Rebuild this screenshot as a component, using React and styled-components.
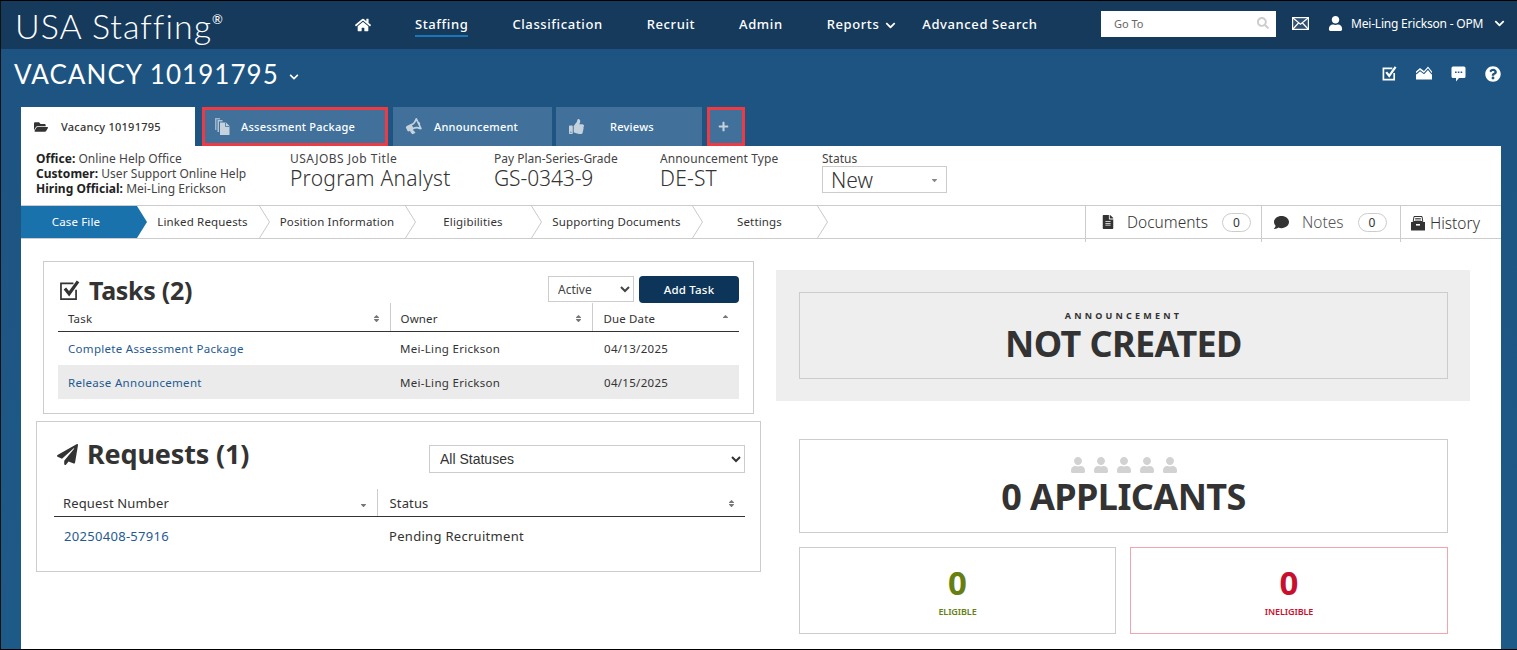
import React from 'react';
import styled, { createGlobalStyle } from 'styled-components';
import {
  FaHome, FaUser, FaChevronDown, FaFolderOpen, FaBullhorn, FaThumbsUp, FaPlus, FaSearch,
  FaFileAlt, FaComment, FaPaperPlane, FaSort, FaSortDown, FaSortUp, FaQuestionCircle,
} from 'react-icons/fa';

const GlobalStyle = createGlobalStyle`
  html, body { margin: 0; padding: 0; background: #1d5784; }
  * { box-sizing: border-box; }
  body { font-family: "Noto Sans", "Open Sans", sans-serif; color: #333; }
`;

const Frame = styled.div`
  width: 1517px;
  height: 650px;
  overflow: hidden;
  border-top: 1px solid #000;
  border-left: 1px solid #111;
  border-bottom: 1px solid #000;
  background: linear-gradient(180deg, #1d5380 0%, #1e5a88 100%);
`;

const Header = styled.header`
  height: 48px;
  background: #163a5c;
  display: flex;
  align-items: center;
  color: #fff;
  padding-left: 14px;
`;

const Logo = styled.div`
  font-family: Lato, sans-serif;
  font-weight: 300;
  font-size: 34px;
  letter-spacing: 1px;
  width: 340px;
  white-space: nowrap;
  sup { font-size: 13px; font-weight: 400; vertical-align: 15px; line-height: 0; letter-spacing: 0; }
`;

const Nav = styled.nav`
  display: flex;
  align-items: center;
  gap: 44px;
  width: 746px;
  margin-top: -1px;
`;

const NavLink = styled.span`
  font-size: 13px;
  letter-spacing: 0.6px;
  font-weight: 500;
  display: inline-flex;
  align-items: center;
  white-space: nowrap;
  padding: 3px 0 2px;
  border-bottom: 2px solid ${({ $active }) => ($active ? '#1a76b5' : 'transparent')};
  svg { margin: 2px -18px 0 6px; }
`;

const SearchBox = styled.div`
  width: 175px;
  height: 26px;
  margin-top: -3px;
  background: #fff;
  color: #666;
  font-size: 11px;
  display: flex;
  align-items: center;
  justify-content: space-between;
  padding: 0 7px 1px 13px;
  svg { color: #ccc; font-size: 12px; }
`;

const UserArea = styled.div`
  display: flex;
  align-items: center;
  margin: -3px 0 0 16px;
  font-size: 12px;
  letter-spacing: -0.2px;
  white-space: nowrap;
`;

const UserIcon = styled(FaUser)`
  margin-left: 19px;
`;

const UserName = styled.span`
  margin: 0 11px 0 8px;
`;

const TitleRow = styled.div`
  height: 58px;
  display: flex;
  justify-content: space-between;
  align-items: flex-start;
  color: #fff;
  padding: 9px 16px 0 13px;
`;

const VacancyTitle = styled.h1`
  margin: 0;
  font-family: Lato, sans-serif;
  font-weight: 400;
  font-size: 26px;
  letter-spacing: 1.05px;
  line-height: 32px;
  display: flex;
  align-items: center;
  gap: 10px;
  svg { font-size: 10px; margin-top: 5px; }
`;

const ToolIcons = styled.div`
  display: flex;
  gap: 19px;
  padding-top: 8px;
`;

const Tabs = styled.div`
  height: 39px;
  display: flex;
  padding-left: 20px;
`;

const Tab = styled.div`
  width: ${({ $w }) => $w}px;
  margin-right: ${({ $mr }) => $mr}px;
  display: flex;
  align-items: center;
  padding-left: ${({ $pl }) => $pl}px;
  font-size: 11px;
  font-weight: 500;
  letter-spacing: 0.25px;
  white-space: nowrap;
  color: ${({ $active }) => ($active ? '#333' : '#fff')};
  background: ${({ $active }) => ($active ? '#fff' : '#41719b')};
  border: ${({ $marked }) => ($marked ? '3px solid #ee3a43' : 'none')};
  svg { flex: none; color: ${({ $active }) => ($active ? '#333' : '#c4d2de')}; }
`;

const TabLabel = styled.span`
  margin-left: ${({ $ml }) => $ml}px;
`;

const TiltedBullhorn = styled(FaBullhorn)`
  transform: rotate(-25deg);
`;

const Content = styled.main`
  width: 1480px;
  height: 504px;
  margin-left: 20px;
  background: #fff;
`;

const InfoRow = styled.section`
  height: 59px;
  display: flex;
  padding: 5px 0 0 15px;
`;

const OrgBlock = styled.div`
  width: 254px;
  font-size: 12px;
  line-height: 15px;
  letter-spacing: 0.03px;
  color: #444;
  b { color: #222; font-weight: 700; }
`;

const InfoField = styled.div`
  width: ${({ $w }) => $w}px;
`;

const FieldLabel = styled.div`
  font-size: 12px;
  line-height: 15px;
  letter-spacing: ${({ $ls }) => $ls ?? 0}px;
  color: #444;
`;

const FieldValue = styled.div`
  font-size: 21px;
  line-height: 25px;
  letter-spacing: ${({ $ls }) => $ls ?? -0.1}px;
  font-weight: 300;
  color: #333;
`;

const StatusSelect = styled.div`
  width: 125px;
  height: 27px;
  border: 1px solid #ccc;
  display: flex;
  align-items: center;
  justify-content: space-between;
  padding: 0 7px 0 8px;
  font-size: 21px;
  font-weight: 300;
  svg { font-size: 9px; color: #888; margin-bottom: 3px; }
`;

const StepBar = styled.div`
  height: 34px;
  border-top: 1px solid #ccc;
  border-bottom: 1px solid #ccc;
  display: flex;
`;

const Steps = styled.div`
  flex: 1;
  display: flex;
`;

const Step = styled.div`
  position: relative;
  width: ${({ $w }) => $w}px;
  display: flex;
  align-items: center;
  justify-content: center;
  font-size: 11.5px;
  letter-spacing: 0.15px;
  white-space: nowrap;
  color: ${({ $active }) => ($active ? '#fff' : '#333')};
  background: ${({ $active }) => ($active ? '#1a72ad' : 'transparent')};
  clip-path: ${({ $active }) => ($active ? 'polygon(0 0, calc(100% - 10px) 0, 100% 50%, calc(100% - 10px) 100%, 0 100%)' : 'none')};
  padding: 0 ${({ $pr }) => $pr || 0}px 2px 0;
`;

const Chevron = styled.svg`
  position: absolute;
  right: 0;
  top: 0;
  width: 11px;
  height: 32px;
`;

const SideTab = styled.div`
  width: ${({ $w }) => $w}px;
  height: 36px;
  border-left: 1px solid #ccc;
  display: flex;
  align-items: center;
  padding: 0 0 ${({ $pb }) => $pb ?? 4}px ${({ $pl }) => $pl}px;
  font-size: 15.5px;
  font-weight: 300;
  color: ${({ $muted }) => ($muted ? '#555' : '#333')};
  white-space: nowrap;
  svg { color: #333; flex: none; }
`;

const SideLabel = styled.span`
  margin-left: ${({ $ml }) => $ml}px;
`;

const Count = styled.span`
  width: 29px;
  height: 19px;
  border: 1px solid #ccc;
  border-radius: 10px;
  margin-left: ${({ $ml }) => $ml}px;
  display: inline-flex;
  align-items: center;
  justify-content: center;
  font-size: 12px;
  font-weight: 400;
  color: #333;
`;

const Columns = styled.div`
  display: grid;
  grid-template-columns: 740px 1fr;
  column-gap: 15px;
`;

const LeftColumn = styled.div`
  padding: 22px 0 0 15px;
  display: flex;
  flex-direction: column;
  gap: 7px;
`;

const RightColumn = styled.div`
  padding-top: 31px;
`;

const Panel = styled.section`
  border: 1px solid #ccc;
  margin-left: ${({ $ml }) => $ml}px;
  width: ${({ $w }) => $w}px;
  height: ${({ $h }) => $h}px;
  padding: ${({ $p }) => $p};
`;

const PanelHead = styled.div`
  display: flex;
  justify-content: space-between;
  align-items: flex-start;
  height: ${({ $h }) => $h}px;
`;

const PanelTitle = styled.h2`
  margin: 0 0 0 ${({ $ml }) => $ml || 0}px;
  display: flex;
  align-items: center;
  gap: ${({ $gap }) => $gap}px;
  font-size: ${({ $size }) => $size}px;
  font-weight: 700;
  letter-spacing: ${({ $ls }) => $ls ?? -0.3}px;
  line-height: ${({ $lh }) => $lh || 30}px;
  color: #333;
`;

const Controls = styled.div`
  display: flex;
  gap: 5px;
`;

const SmallSelect = styled.select`
  width: 86px;
  height: 26px;
  border: 1px solid #ccc;
  background: #fff;
  padding-left: 5px;
  font: 12px "Noto Sans", sans-serif;
  color: #444;
`;

const WideSelect = styled.select`
  width: 316px;
  height: 28px;
  margin-top: 6px;
  border: 1px solid #ccc;
  background: #fff;
  padding-left: 6px;
  font: 14px "Liberation Sans", sans-serif;
  color: #333;
`;

const AddButton = styled.button`
  width: 100px;
  height: 27px;
  background: #0c3559;
  color: #fff;
  border: none;
  border-radius: 4px;
  font: 500 11.5px "Noto Sans", sans-serif;
  letter-spacing: 0.2px;
`;

const Table = styled.table`
  width: 100%;
  border-collapse: collapse;
  table-layout: fixed;
  font-size: ${({ $size }) => $size}px;
  color: #333;
`;

const Th = styled.th`
  width: ${({ $w }) => ($w ? `${$w}px` : 'auto')};
  height: ${({ $h }) => $h}px;
  font-weight: 400;
  text-align: left;
  padding: ${({ $pt }) => $pt || 0}px 9px 0 ${({ $pl }) => $pl || 10}px;
  border-bottom: 1px solid #333;
  border-right: 1px solid #ccc;
  &:last-child { border-right: none; }
`;

const ThInner = styled.div`
  display: flex;
  align-items: center;
  justify-content: space-between;
  letter-spacing: 0.15px;
  svg { font-size: 9px; color: #777; }
`;

const Td = styled.td`
  height: ${({ $h }) => $h}px;
  padding: 0 10px 0 ${({ $pl }) => $pl || 10}px;
  letter-spacing: 0.3px;
  white-space: nowrap;
`;

const Row = styled.tr`
  background: ${({ $shaded }) => ($shaded ? '#ebebeb' : 'transparent')};
`;

const TableLink = styled.a`
  color: #1f5a93;
`;

const NoticeWrap = styled.div`
  width: 694px;
  height: 131px;
  background: #eee;
  padding: 22px 22px 22px 23px;
`;

const NoticeBox = styled.div`
  height: 87px;
  border: 1px solid #ccc;
  text-align: center;
  padding-top: 17px;
`;

const NoticeLabel = styled.div`
  font-size: 9px;
  font-weight: 700;
  letter-spacing: 3.2px;
  line-height: 12px;
  color: #333;
  margin-bottom: 2px;
`;

const BigText = styled.div`
  font-size: 36px;
  font-weight: 700;
  letter-spacing: -0.6px;
  line-height: 40px;
  color: #333;
`;

const StatsArea = styled.div`
  width: 649px;
  margin: 38px 0 0 23px;
`;

const ApplicantsBox = styled.div`
  height: 94px;
  border: 1px solid #ccc;
  text-align: center;
  padding-top: 17px;
`;

const People = styled.div`
  display: flex;
  justify-content: center;
  gap: 7px;
  color: #d2d2d2;
  height: 18px;
  margin-bottom: 2px;
`;

const StatGrid = styled.div`
  display: grid;
  grid-template-columns: 317px 318px;
  column-gap: 14px;
  margin-top: 14px;
`;

const StatBox = styled.div`
  height: 87px;
  border: 1px solid ${({ $color }) => ($color === 'red' ? '#f3a5ad' : '#ccc')};
  color: ${({ $color }) => ($color === 'red' ? '#c8102e' : '#667f13')};
  text-align: center;
  padding-top: 15px;
`;

const StatNumber = styled.div`
  font-size: 33px;
  font-weight: 700;
  line-height: 40px;
`;

const StatLabel = styled.div`
  font-size: 9px;
  font-weight: 600;
  line-height: 18px;
  letter-spacing: -0.1px;
`;

const Mail = () => (
  <svg width="17" height="13" viewBox="0 0 17 13" fill="none" stroke="#fff" strokeWidth="1.2">
    <rect x="0.6" y="0.6" width="15.8" height="11.8" fill="#fff" fillOpacity="0.12" />
    <path d="M1 1l7.5 6.2L16 1M1 12l5.5-6M16 12l-5.5-6" />
  </svg>
);

const CheckBoxIcon = ({ size = 15, color = '#fff', weight = 1.8 }) => (
  <svg width={size} height={size} viewBox="0 0 16 16" fill="none" stroke={color}>
    <path d="M13 7.5V14.5H1.5V2.5H11" strokeWidth={weight} />
    <path d="M4.5 6.5l3.2 4L14.5 1" strokeWidth="2.4" />
  </svg>
);

const MailboxIcon = () => (
  <svg width="16" height="14" viewBox="0 0 16 14" fill="#fff">
    <path d="M0 13.5V5.5l4-3.5 4 3 4-4.5 4 5V13.5z" />
    <path d="M0 5.5l4-3.5 4 3 4-4.5 4 5" fill="none" stroke="#1d5784" strokeWidth="1.1" transform="translate(0 2.6)" />
  </svg>
);

const ChatDotsIcon = () => (
  <svg width="15" height="16" viewBox="0 0 15 16">
    <path fill="#fff" d="M2 .5h11a1.5 1.5 0 0 1 1.5 1.5v8.5A1.5 1.5 0 0 1 13 12H8l-3 3.5V12H2A1.5 1.5 0 0 1 .5 10.5V2A1.5 1.5 0 0 1 2 .5z" />
    <path fill="#1d5784" d="M4 5.5h1.6v1.6H4zM6.8 5.5h1.6v1.6H6.8zM9.6 5.5h1.6v1.6H9.6z" />
  </svg>
);

const CopiesIcon = () => (
  <svg width="15" height="17" viewBox="0 0 15 17" fill="#c4d2de">
    <path d="M0 0h5v1.5H1.5V12H0z" opacity=".7" />
    <path d="M2.5 2h5v1.5H4V14H2.5z" opacity=".85" />
    <path d="M5 4.5h6l3.5 3.5v9H5z" />
    <path d="M10.5 4.5V8.5h4" fill="none" stroke="#41719b" strokeWidth=".8" />
  </svg>
);

const HistoryIcon = () => (
  <svg width="14" height="15" viewBox="0 0 14 15" fill="#333">
    <path d="M3 .5h8l.8 5H2.2z" fill="none" stroke="#333" />
    <path d="M4.2 2.5h5.6M4 4h6" stroke="#333" strokeWidth=".8" />
    <path d="M0 6h14v8.5H0z" />
    <path d="M5 8h4v1.6H5z" fill="#fff" />
  </svg>
);

const StepChevron = () => (
  <Chevron viewBox="0 0 11 32" fill="none" stroke="#c9c9c9">
    <path d="M.5 0L10.5 16 .5 32" />
  </Chevron>
);

const steps = [
  { label: 'Case File', w: 126, active: true, pr: 16 },
  { label: 'Linked Requests', w: 123, pr: 12 },
  { label: 'Position Information', w: 146, pr: 12 },
  { label: 'Eligibilities', w: 126, pr: 12 },
  { label: 'Supporting Documents', w: 161, pr: 12 },
  { label: 'Settings', w: 125, pr: 12 },
];

export default function App() {
  return (
    <Frame>
      <GlobalStyle />
      <Header>
        <Logo>USA Staffing<sup>®</sup></Logo>
        <Nav>
          <FaHome size={16} />
          <NavLink $active>Staffing</NavLink>
          <NavLink>Classification</NavLink>
          <NavLink>Recruit</NavLink>
          <NavLink>Admin</NavLink>
          <NavLink>Reports <FaChevronDown size={11} /></NavLink>
          <NavLink>Advanced Search</NavLink>
        </Nav>
        <SearchBox>Go To <FaSearch /></SearchBox>
        <UserArea>
          <Mail />
          <UserIcon size={15} />
          <UserName>Mei-Ling Erickson - OPM</UserName>
          <FaChevronDown size={11} />
        </UserArea>
      </Header>

      <TitleRow>
        <VacancyTitle>VACANCY 10191795 <FaChevronDown /></VacancyTitle>
        <ToolIcons>
          <CheckBoxIcon />
          <MailboxIcon />
          <ChatDotsIcon />
          <FaQuestionCircle size={16} />
        </ToolIcons>
      </TitleRow>

      <Tabs>
        <Tab $active $w={174} $mr={7} $pl={13}>
          <FaFolderOpen size={14} />
          <TabLabel $ml={13}>Vacancy 10191795</TabLabel>
        </Tab>
        <Tab $marked $w={186} $mr={5} $pl={10}>
          <CopiesIcon />
          <TabLabel $ml={11}>Assessment Package</TabLabel>
        </Tab>
        <Tab $w={159} $mr={4} $pl={13}>
          <TiltedBullhorn size={15} />
          <TabLabel $ml={13}>Announcement</TabLabel>
        </Tab>
        <Tab $w={146} $mr={5} $pl={13}>
          <FaThumbsUp size={15} />
          <TabLabel $ml={26}>Reviews</TabLabel>
        </Tab>
        <Tab $marked $w={38} $pl={8}>
          <FaPlus size={11} />
        </Tab>
      </Tabs>

      <Content>
        <InfoRow>
          <OrgBlock>
            <div><b>Office:</b> Online Help Office</div>
            <div><b>Customer:</b> User Support Online Help</div>
            <div><b>Hiring Official:</b> Mei-Ling Erickson</div>
          </OrgBlock>
          <InfoField $w={204}>
            <FieldLabel $ls={0.5}>USAJOBS Job Title</FieldLabel>
            <FieldValue $ls={0.25}>Program Analyst</FieldValue>
          </InfoField>
          <InfoField $w={166}>
            <FieldLabel>Pay Plan-Series-Grade</FieldLabel>
            <FieldValue>GS-0343-9</FieldValue>
          </InfoField>
          <InfoField $w={162}>
            <FieldLabel $ls={0.1}>Announcement Type</FieldLabel>
            <FieldValue $ls={0.2}>DE-ST</FieldValue>
          </InfoField>
          <InfoField $w={125}>
            <FieldLabel>Status</FieldLabel>
            <StatusSelect>New <FaSortDown /></StatusSelect>
          </InfoField>
        </InfoRow>

        <StepBar>
          <Steps>
            {steps.map((s) => (
              <Step key={s.label} $w={s.w} $active={s.active} $pr={s.pr}>
                {s.label}
                {!s.active && <StepChevron />}
              </Step>
            ))}
          </Steps>
          <SideTab $w={176} $pl={15}>
            <FaFileAlt size={14} />
            <SideLabel $ml={12}>Documents</SideLabel>
            <Count $ml={14}>0</Count>
          </SideTab>
          <SideTab $w={139} $pl={12} $muted>
            <FaComment size={15} />
            <SideLabel $ml={13}>Notes</SideLabel>
            <Count $ml={14}>0</Count>
          </SideTab>
          <SideTab $w={101} $pl={10} $pb={2}>
            <HistoryIcon />
            <SideLabel $ml={5}>History</SideLabel>
          </SideTab>
        </StepBar>

        <Columns>
          <LeftColumn>
            <Panel $ml={7} $w={711} $h={153} $p="14px 14px 0">
              <PanelHead $h={27}>
                <PanelTitle $size={25} $gap={9} $ml={1} $lh={28}>
                  <CheckBoxIcon size={21} color="#333" weight={1.3} />
                  Tasks (2)
                </PanelTitle>
                <Controls>
                  <SmallSelect defaultValue="Active">
                    <option>Active</option>
                  </SmallSelect>
                  <AddButton>Add Task</AddButton>
                </Controls>
              </PanelHead>
              <Table $size={11.5}>
                <thead>
                  <tr>
                    <Th $w={332} $h={28} $pt={3}><ThInner>Task <FaSort /></ThInner></Th>
                    <Th $w={202} $h={28} $pt={3}><ThInner>Owner <FaSort /></ThInner></Th>
                    <Th $h={28} $pt={3} $pl={11}><ThInner>Due Date <FaSortUp /></ThInner></Th>
                  </tr>
                </thead>
                <tbody>
                  <Row>
                    <Td $h={34}><TableLink>Complete Assessment Package</TableLink></Td>
                    <Td $h={34}>Mei-Ling Erickson</Td>
                    <Td $h={34} $pl={12}>04/13/2025</Td>
                  </Row>
                  <Row $shaded>
                    <Td $h={34}><TableLink>Release Announcement</TableLink></Td>
                    <Td $h={34}>Mei-Ling Erickson</Td>
                    <Td $h={34} $pl={12}>04/15/2025</Td>
                  </Row>
                </tbody>
              </Table>
            </Panel>

            <Panel $w={725} $h={151} $p="17px 15px 0 17px">
              <PanelHead $h={50}>
                <PanelTitle $size={27} $gap={9} $ml={3} $ls={-0.15}>
                  <FaPaperPlane size={21} />
                  Requests (1)
                </PanelTitle>
                <WideSelect defaultValue="All Statuses">
                  <option>All Statuses</option>
                </WideSelect>
              </PanelHead>
              <Table $size={13}>
                <thead>
                  <tr>
                    <Th $w={323} $h={27} $pl={9} $pt={2}><ThInner>Request Number <FaSortDown /></ThInner></Th>
                    <Th $h={27} $pl={12} $pt={2}><ThInner>Status <FaSort /></ThInner></Th>
                  </tr>
                </thead>
                <tbody>
                  <Row>
                    <Td $h={40}><TableLink>20250408-57916</TableLink></Td>
                    <Td $h={40} $pl={12}>Pending Recruitment</Td>
                  </Row>
                </tbody>
              </Table>
            </Panel>
          </LeftColumn>

          <RightColumn>
            <NoticeWrap>
              <NoticeBox>
                <NoticeLabel>ANNOUNCEMENT</NoticeLabel>
                <BigText>NOT CREATED</BigText>
              </NoticeBox>
            </NoticeWrap>
            <StatsArea>
              <ApplicantsBox>
                <People>
                  {[0, 1, 2, 3, 4].map((i) => <FaUser key={i} size={16} />)}
                </People>
                <BigText>0 APPLICANTS</BigText>
              </ApplicantsBox>
              <StatGrid>
                <StatBox>
                  <StatNumber>0</StatNumber>
                  <StatLabel>ELIGIBLE</StatLabel>
                </StatBox>
                <StatBox $color="red">
                  <StatNumber>0</StatNumber>
                  <StatLabel>INELIGIBLE</StatLabel>
                </StatBox>
              </StatGrid>
            </StatsArea>
          </RightColumn>
        </Columns>
      </Content>
    </Frame>
  );
}
